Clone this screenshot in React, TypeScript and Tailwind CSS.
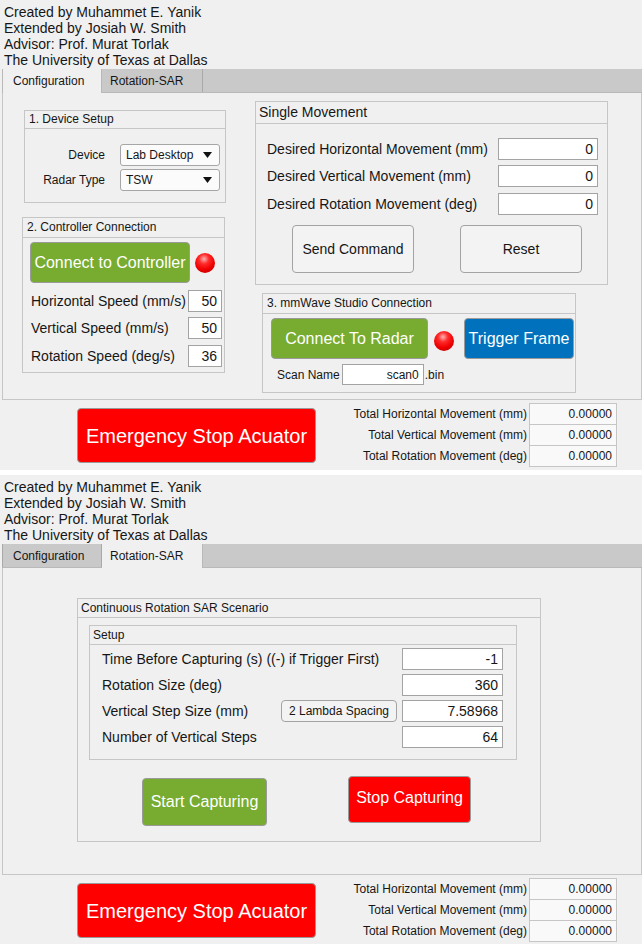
import React from "react";

function Led({ className = "" }: { className?: string }) {
  return (
    <div
      className={`w-[20px] h-[20px] rounded-full shrink-0 bg-[radial-gradient(circle_at_45%_30%,#ffb3b3_0%,#ff2a2a_28%,#ee0000_60%,#b00000_100%)] ${className}`}
    />
  );
}

function Field({ value, className = "" }: { value: string; className?: string }) {
  return (
    <div
      className={`bg-white border border-[#a3a3a3] flex items-center justify-end pr-[4px] shrink-0 ${className}`}
    >
      {value}
    </div>
  );
}

function Dropdown({ value }: { value: string }) {
  return (
    <div className="ml-[15px] w-[100px] h-[22px] border border-[#a6a6a6] rounded-[3px] bg-[#fbfbfb] flex items-center justify-between pl-[5px] pr-[7px] text-[12px]">
      <span>{value}</span>
      <svg width="9" height="6" viewBox="0 0 9 6">
        <polygon points="0,0 9,0 4.5,6" fill="#111" />
      </svg>
    </div>
  );
}

function ConfigContent() {
  return (
    <div className="flex">
      <div className="ml-[19px] w-[203px] shrink-0">
        <div className="ml-[2px] mt-[17px] w-[202px] h-[93px] border border-[#c6c6c6]">
          <div className="h-[18px] border-b border-[#c6c6c6] pl-[4px] text-[12px] leading-[17px]">
            1. Device Setup
          </div>
          <div className="pt-[15px] flex flex-col gap-[3px]">
            <div className="flex items-center h-[22px]">
              <div className="w-[80px] text-right text-[12px]">Device</div>
              <Dropdown value="Lab Desktop" />
            </div>
            <div className="flex items-center h-[22px]">
              <div className="w-[80px] text-right text-[12px]">Radar Type</div>
              <Dropdown value="TSW" />
            </div>
          </div>
        </div>
        <div className="mt-[14px] w-[203px] h-[156px] border border-[#c6c6c6]">
          <div className="h-[20px] border-b border-[#c6c6c6] pl-[4px] text-[12px] leading-[19px]">
            2. Controller Connection
          </div>
          <div className="mt-[4px] ml-[7px] flex items-center">
            <div className="w-[160px] h-[41px] rounded-[4px] bg-[#77ac30] border border-[#9a9a9a] text-white text-[16px] flex items-center justify-center">
              Connect to Controller
            </div>
            <Led className="ml-[5px]" />
          </div>
          <div className="mt-[7px] flex items-center h-[22px] text-[14px]">
            <div className="w-[165px] pl-[8px]">Horizontal Speed (mm/s)</div>
            <Field value="50" className="w-[34px] h-[22px]" />
          </div>
          <div className="mt-[5px] flex items-center h-[22px] text-[14px]">
            <div className="w-[165px] pl-[8px]">Vertical Speed (mm/s)</div>
            <Field value="50" className="w-[34px] h-[22px]" />
          </div>
          <div className="mt-[6px] flex items-center h-[22px] text-[14px]">
            <div className="w-[165px] pl-[8px]">Rotation Speed (deg/s)</div>
            <Field value="36" className="w-[34px] h-[22px]" />
          </div>
        </div>
      </div>
      <div className="ml-[30px] mt-[8px] shrink-0">
        <div className="w-[353px] h-[184px] border border-[#c6c6c6]">
          <div className="h-[22px] border-b border-[#c6c6c6] pl-[3px] text-[14px] leading-[21px]">
            Single Movement
          </div>
          <div className="mt-[14px] flex items-center h-[22px] text-[14px]">
            <div className="w-[242px] pl-[11px]">Desired Horizontal Movement (mm)</div>
            <Field value="0" className="w-[100px] h-[22px]" />
          </div>
          <div className="mt-[5px] flex items-center h-[22px] text-[14px]">
            <div className="w-[242px] pl-[11px]">Desired Vertical Movement (mm)</div>
            <Field value="0" className="w-[100px] h-[22px]" />
          </div>
          <div className="mt-[6px] flex items-center h-[22px] text-[14px]">
            <div className="w-[242px] pl-[11px]">Desired Rotation Movement (deg)</div>
            <Field value="0" className="w-[100px] h-[22px]" />
          </div>
          <div className="mt-[10px] flex">
            <div className="ml-[36px] w-[122px] h-[48px] rounded-[4px] border border-[#a3a3a3] bg-[#f3f3f3] text-[14px] flex items-center justify-center">
              Send Command
            </div>
            <div className="ml-[46px] w-[122px] h-[48px] rounded-[4px] border border-[#a3a3a3] bg-[#f3f3f3] text-[14px] flex items-center justify-center">
              Reset
            </div>
          </div>
        </div>
        <div className="ml-[7px] mt-[8px] w-[314px] h-[100px] border border-[#c6c6c6]">
          <div className="h-[20px] border-b border-[#c6c6c6] pl-[4px] text-[12px] leading-[19px]">
            3. mmWave Studio Connection
          </div>
          <div className="mt-[4px] ml-[8px] flex items-start">
            <div className="w-[157px] h-[41px] rounded-[4px] bg-[#77ac30] border border-[#9a9a9a] text-white text-[16px] flex items-center justify-center">
              Connect To Radar
            </div>
            <Led className="ml-[6px] mt-[13px]" />
            <div className="ml-[10px] w-[110px] h-[41px] rounded-[4px] bg-[#0072bd] border border-[#9a9a9a] text-white text-[16px] flex items-center justify-center">
              Trigger Frame
            </div>
          </div>
          <div className="mt-[5px] pl-[14px] flex items-center text-[12px]">
            <span>Scan Name</span>
            <Field value="scan0" className="ml-[2px] w-[82px] h-[21px] text-[12px]" />
            <span className="ml-[1px]">.bin</span>
          </div>
        </div>
      </div>
    </div>
  );
}

function SarContent() {
  return (
    <div className="ml-[74px] mt-[30px] w-[464px] h-[244px] border border-[#c6c6c6]">
      <div className="h-[19px] border-b border-[#c6c6c6] pl-[3px] text-[12px] leading-[18px]">
        Continuous Rotation SAR Scenario
      </div>
      <div className="ml-[11px] mt-[7px] w-[428px] h-[135px] border border-[#c6c6c6]">
        <div className="h-[19px] border-b border-[#c6c6c6] pl-[3px] text-[12px] leading-[18px]">
          Setup
        </div>
        <div className="mt-[3px] flex flex-col gap-[4px] text-[14px]">
          <div className="flex items-center h-[22px]">
            <div className="w-[312px] pl-[12px]">Time Before Capturing (s) ((-) if Trigger First)</div>
            <Field value="-1" className="w-[101px] h-[22px]" />
          </div>
          <div className="flex items-center h-[22px]">
            <div className="w-[312px] pl-[12px]">Rotation Size (deg)</div>
            <Field value="360" className="w-[101px] h-[22px]" />
          </div>
          <div className="flex items-center h-[22px]">
            <div className="w-[191px] pl-[12px]">Vertical Step Size (mm)</div>
            <div className="w-[116px] h-[22px] rounded-[4px] border border-[#a3a3a3] bg-[#f3f3f3] text-[12px] flex items-center justify-center">
              2 Lambda Spacing
            </div>
            <Field value="7.58968" className="ml-[5px] w-[101px] h-[22px]" />
          </div>
          <div className="flex items-center h-[22px]">
            <div className="w-[312px] pl-[12px]">Number of Vertical Steps</div>
            <Field value="64" className="w-[101px] h-[22px]" />
          </div>
        </div>
      </div>
      <div className="flex items-start">
        <div className="ml-[64px] mt-[18px] w-[125px] h-[48px] rounded-[4px] bg-[#77ac30] border border-[#9a9a9a] text-white text-[16px] flex items-center justify-center">
          Start Capturing
        </div>
        <div className="ml-[81px] mt-[16px] w-[123px] h-[47px] rounded-[4px] bg-[#ff0000] border border-[#9a9a9a] text-white text-[16px] flex items-center justify-center pb-[4px]">
          Stop Capturing
        </div>
      </div>
    </div>
  );
}

function Tabs({ active }: { active: "config" | "sar" }) {
  return (
    <div className="mt-[1px] ml-[2px] w-[640px] h-[24px] bg-[#c9c9c9] border-b border-[#b9b9b9] flex text-[12px]">
      <div
        className={
          active === "config"
            ? "w-[100px] h-[24px] bg-[#f0f0f0] border-l border-r border-[#b9b9b9] pl-[10px] flex items-center"
            : "w-[100px] h-[23px] border-l border-r border-[#a9a9a9] pl-[10px] flex items-center"
        }
      >
        Configuration
      </div>
      <div
        className={
          active === "sar"
            ? "w-[101px] h-[24px] bg-[#f0f0f0] border-r border-[#b9b9b9] pl-[8px] flex items-center"
            : "w-[101px] h-[23px] border-r border-[#a9a9a9] pl-[8px] flex items-center"
        }
      >
        Rotation-SAR
      </div>
    </div>
  );
}

function Bottom() {
  const rows = [
    "Total Horizontal Movement (mm)",
    "Total Vertical Movement (mm)",
    "Total Rotation Movement (deg)",
  ];
  return (
    <div className="flex items-start">
      <div className="ml-[77px] mt-[8px] w-[239px] h-[55px] rounded-[4px] bg-[#ff0000] border border-[#9a9a9a] text-white text-[20px] flex items-center justify-center">
        Emergency Stop Acuator
      </div>
      <div className="ml-auto mr-[25px] mt-[3px] flex flex-col">
        {rows.map((l, i) => (
          <div key={l} className={i > 0 ? "-mt-px flex items-center justify-end" : "flex items-center justify-end"}>
            <span className="text-[12px] mr-[2px]">{l}</span>
            <div className="w-[88px] h-[22px] border border-[#c6c6c6] bg-[#f9f9f9] text-[12px] flex items-center justify-end pr-[4px]">
              0.00000
            </div>
          </div>
        ))}
      </div>
    </div>
  );
}

function Screen({ tab }: { tab: "config" | "sar" }) {
  return (
    <div className="h-[470px] bg-[#f0f0f0] text-[#161616] font-['Liberation_Sans',Arial,sans-serif] overflow-hidden">
      <div className="pt-[4px] pl-[4px] text-[14px] leading-[16px]">
        <div>Created by Muhammet E. Yanik</div>
        <div>Extended by Josiah W. Smith</div>
        <div>Advisor: Prof. Murat Torlak</div>
        <div>The University of Texas at Dallas</div>
      </div>
      <Tabs active={tab} />
      <div className="ml-[2px] w-[640px] h-[307px] border-x border-b border-[#c6c6c6] overflow-hidden">
        {tab === "config" ? <ConfigContent /> : <SarContent />}
      </div>
      <Bottom />
    </div>
  );
}

export default function App() {
  return (
    <div className="w-[642px] bg-white">
      <Screen tab="config" />
      <div className="h-[5px] bg-white" />
      <Screen tab="sar" />
    </div>
  );
}
